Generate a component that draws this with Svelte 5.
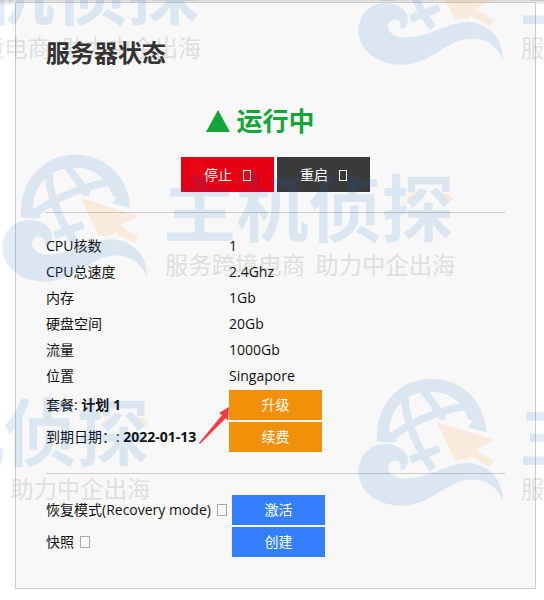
<script lang="ts">
	type Spec = { label: string; value: string };
	type Action = { label: string; value: string; action: string };

	const specs: Spec[] = [
		{ label: 'CPU核数', value: '1' },
		{ label: 'CPU总速度', value: '2.4Ghz' },
		{ label: '内存', value: '1Gb' },
		{ label: '硬盘空间', value: '20Gb' },
		{ label: '流量', value: '1000Gb' },
		{ label: '位置', value: 'Singapore' }
	];

	const billing: Action[] = [
		{ label: '套餐:', value: '计划 1', action: '升级' },
		{ label: '到期日期：:', value: '2022-01-13', action: '续费' }
	];

	const tools = [
		{ label: '恢复模式(Recovery mode)', action: '激活' },
		{ label: '快照', action: '创建' }
	];

	const marks = [
		{ x: -254, y: -77 },
		{ x: 356, y: -77 },
		{ x: 0, y: 140 },
		{ x: -305, y: 364 },
		{ x: 356, y: 364 }
	];
</script>

<main class="page">
	<section class="panel">
		<h1>服务器状态</h1>

		<div class="status">
			<svg viewBox="0 0 24 22" aria-hidden="true"><path d="M12 0 24 22H0z" /></svg>
			<span>运行中</span>
		</div>

		<div class="power">
			<button class="stop" type="button">停止<i class="glyph"></i></button>
			<button class="restart" type="button">重启<i class="glyph"></i></button>
		</div>

		<hr />

		<dl class="specs">
			{#each specs as spec}
				<div class="specRow">
					<dt>{spec.label}</dt>
					<dd>{spec.value}</dd>
				</div>
			{/each}
		</dl>

		<div class="actions">
			{#each billing as row, i}
				<div class="actionRow">
					<div class="label">{row.label} <b>{row.value}</b></div>
					<div class="buttonWrap">
						<button class="order" type="button">{row.action}</button>
						{#if i === 0}
							<svg class="pointer" viewBox="0 0 32 38" aria-hidden="true">
								<path d="M31 0 21 6l3 2L1 36l1 1 26-26 2 3z" />
							</svg>
						{/if}
					</div>
				</div>
			{/each}
		</div>

		<hr class="lower" />

		<div class="actions tools">
			{#each tools as tool}
				<div class="actionRow">
					<div class="label toolLabel">{tool.label}<i class="help"></i></div>
					<button class="tool" type="button">{tool.action}</button>
				</div>
			{/each}
		</div>
	</section>

	<div class="watermark" aria-hidden="true">
		{#each marks as mark}
			<svg
				class="mark"
				viewBox="0 0 1380 450"
				style:left={`${mark.x}px`}
				style:top={`${mark.y}px`}
			>
				<g class="blue" transform="translate(-252 -13)">
					<path d="M315 245C308 138 380 57 478 57c90 0 160 65 165 161l-55-15 14-18-13-7C575 128 532 96 475 96c-72 0-123 50-123 119l23 28q-8 9-60 2z" />
					<path class="line" d="M350 238q95-75 232-99M398 112c3 68 34 150 85 216M452 90q23 28 62 86M415 300l87-33" />
					<path d="m522 183-35-13 20-22z" />
					<path d="M340 253c56 2 82 41 61 71-8 11-19 7-16-6 3-12-15-20-30-10-16 14-5 42 30 48 85 6 135-46 205-46 60 5 105 50 102 113-17-43-52-65-102-63-70 5-110 77-205 78-85-3-125-53-126-103 3-45 31-82 81-82z" />
				</g>
				<g class="orange">
					<path d="m243 175 171 52-53 30 53 35-12 17-59-32-3 8-44 3z" />
					<circle cx="593" cy="87" r="28" opacity="0.5" />
					<path d="M1217 180q18-22 38-22 18 0 20 8-9 20-36 20zM1363 180q-18-22-38-22-18 0-20 8 9 20 36 20z" />
				</g>
				<text class="brand" x="490" y="288">主机侦探</text>
				<text class="slogan" x="495" y="402">服务跨境电商</text>
				<text class="slogan" x="946" y="402">助力中企出海</text>
			</svg>
		{/each}
	</div>
</main>

<style>
	:global(body) {
		margin: 0;
		background: #fff;
	}

	.page {
		position: relative;
		min-height: 100vh;
		box-sizing: border-box;
		padding: 2px 8px 11px 15px;
		overflow: hidden;
		background: linear-gradient(#d8d8d8, #f4f4f4 4px, #fff 6px);
		color: #111;
		font: 14px/26px 'Open Sans', 'Noto Sans CJK SC', sans-serif;
	}

	.panel {
		padding: 30px 30px 31px;
		border: 1px solid #ccc;
		background: #f8f8f8;
	}

	h1 {
		margin: 0;
		color: #333;
		font-size: 24px;
		font-weight: 700;
		line-height: 40px;
	}

	.status {
		display: flex;
		align-items: center;
		justify-content: center;
		gap: 6px;
		margin-top: 28px;
		margin-right: 30px;
		color: #14a53a;
		font-size: 26px;
		font-weight: 700;
		line-height: 40px;
	}

	.status svg {
		width: 24px;
		height: 22px;
		fill: currentColor;
	}

	.power {
		display: flex;
		justify-content: center;
		gap: 3px;
		margin-top: 16px;
	}

	button {
		width: 93px;
		height: 30px;
		padding: 0;
		border: 0;
		color: #fff;
		font: inherit;
		cursor: pointer;
	}

	.power button {
		display: flex;
		align-items: center;
		justify-content: center;
		gap: 11px;
		height: 35px;
	}

	.stop {
		background: #e60014;
	}

	.restart {
		background: #3a3a3a;
	}

	.order {
		display: block;
		background: #f29109;
	}

	.tool {
		background: #337fff;
	}

	.glyph {
		box-sizing: border-box;
		width: 8px;
		height: 11px;
		margin-top: 2px;
		border: 1px solid #fff;
	}

	hr {
		height: 1px;
		margin: 20px 0;
		border: 0;
		background: #ccc;
	}

	.lower {
		margin-top: 21px;
	}

	dl,
	dd {
		margin: 0;
	}

	.specRow {
		display: flex;
	}

	dt {
		width: 183px;
	}

	.actions {
		display: grid;
		gap: 2px;
		margin-top: 1px;
	}

	.tools {
		margin-top: 21px;
	}

	.actionRow {
		display: flex;
		align-items: center;
	}

	.label {
		width: 183px;
		white-space: nowrap;
	}

	.toolLabel {
		display: flex;
		align-items: center;
		gap: 6px;
		width: 186px;
	}

	.help {
		box-sizing: border-box;
		width: 10px;
		height: 12px;
		border: 1px solid #aaa;
	}

	.buttonWrap {
		position: relative;
	}

	.pointer {
		position: absolute;
		top: 17px;
		left: -31px;
		width: 32px;
		height: 38px;
		fill: #fb3b3b;
	}

	.watermark {
		position: absolute;
		inset: 0;
		overflow: hidden;
		pointer-events: none;
	}

	.mark {
		position: absolute;
		width: 460px;
		height: 150px;
		opacity: 0.12;
	}

	.blue,
	.brand {
		fill: #1469c3;
	}

	.line {
		fill: none;
		stroke: #1469c3;
		stroke-width: 23px;
	}

	.orange {
		fill: #fa8e19;
	}

	.brand {
		font-family: 'Noto Sans CJK SC', sans-serif;
		font-size: 218px;
		font-weight: 700;
	}

	.slogan {
		fill: #282828;
		font-family: 'Noto Sans CJK SC', sans-serif;
		font-size: 70px;
	}
</style>
